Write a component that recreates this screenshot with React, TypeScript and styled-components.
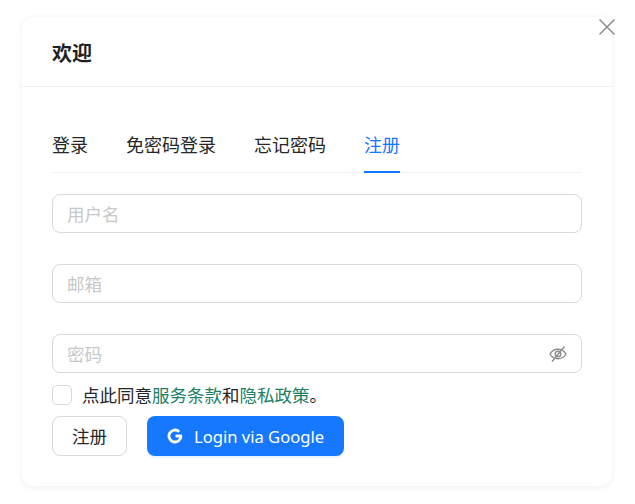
import styled, { createGlobalStyle } from "styled-components";
import { useState } from "react";

const GlobalStyle = createGlobalStyle`
  html, body {
    margin: 0;
    background: #fff;
  }
  body {
    font-family: "Noto Sans", "Noto Sans CJK SC", sans-serif;
    color: #1f1f1f;
  }
  * {
    box-sizing: border-box;
  }
`;

const Page = styled.div`
  position: relative;
  width: 635px;
  height: 504px;
  padding: 17px 23px 18px 22px;
  overflow: hidden;
`;

const CloseButton = styled.button`
  position: absolute;
  top: 19px;
  right: 20px;
  width: 16px;
  height: 16px;
  padding: 0;
  border: none;
  background: none;
  display: flex;
  color: #8c8c8c;
`;

const Card = styled.div`
  height: 469px;
  background: #fff;
  border-radius: 12px;
  box-shadow: 0 1px 6px rgba(0, 0, 0, 0.07);
`;

const Header = styled.header`
  height: 70px;
  padding: 4px 30px 0;
  display: flex;
  align-items: center;
  border-bottom: 1px solid #f0f0f0;
`;

const Title = styled.h2`
  margin: 0;
  font-size: 20px;
  line-height: 28px;
  font-weight: 700;
  color: #1f1f1f;
`;

const Body = styled.div`
  padding: 36px 30px 0;
`;

const Tabs = styled.nav`
  height: 50px;
  display: flex;
  gap: 38px;
  border-bottom: 1px solid #f0f0f0;
`;

const Tab = styled.a<{ $active?: boolean }>`
  height: 50px;
  padding-top: 9px;
  font-size: 18px;
  line-height: 26px;
  font-weight: 400;
  color: ${({ $active }) => ($active ? "#1677ff" : "#262626")};
  border-bottom: 2px solid ${({ $active }) => ($active ? "#1677ff" : "transparent")};
`;

const Fields = styled.div`
  margin-top: 21px;
  display: flex;
  flex-direction: column;
  gap: 31px;
`;

const InputBox = styled.div`
  height: 39px;
  padding: 0 14px;
  display: flex;
  align-items: center;
  justify-content: space-between;
  border: 1px solid #d9d9d9;
  border-radius: 8px;
`;

const Input = styled.input`
  flex: 1;
  min-width: 0;
  padding: 0;
  border: none;
  outline: none;
  background: none;
  font-family: inherit;
  font-size: 17.5px;
  font-weight: 400;
  &::placeholder {
    color: #c8c8c8;
  }
`;

const EyeIcon = styled.svg`
  width: 18px;
  height: 18px;
  color: #8c8c8c;
  flex: none;
`;

const AgreeRow = styled.label`
  margin-top: 12px;
  height: 20px;
  display: flex;
  align-items: center;
  gap: 10px;
  font-size: 17.5px;
  font-weight: 400;
  color: #262626;
`;

const AgreeText = styled.span`
  margin-bottom: 2px;
`;

const CheckBox = styled.input`
  appearance: none;
  width: 20px;
  height: 20px;
  margin: 0;
  flex: none;
  border: 1px solid #d9d9d9;
  border-radius: 5px;
  background: #fff;
`;

const Link = styled.a`
  color: #1a8068;
`;

const Actions = styled.div`
  margin-top: 11px;
  display: flex;
  gap: 20px;
`;

const Button = styled.button`
  height: 40px;
  width: 75px;
  padding: 0 0 2px;
  border: 1px solid #d9d9d9;
  border-radius: 8px;
  background: #fff;
  font-family: inherit;
  font-size: 17.5px;
  font-weight: 400;
  color: #262626;
`;

const GoogleButton = styled.button`
  height: 40px;
  width: 197px;
  padding: 0 0 0 20px;
  display: flex;
  align-items: center;
  gap: 11px;
  border: none;
  border-radius: 8px;
  background: #1677ff;
  box-shadow: 0 2px 0 rgba(5, 145, 255, 0.1);
  font-family: inherit;
  font-size: 16.6px;
  color: #fff;
`;

export default function App() {
  const [username, setUsername] = useState("");
  const [email, setEmail] = useState("");
  const [password, setPassword] = useState("");

  return (
    <Page>
      <GlobalStyle />
      <Card>
        <Header>
          <Title>欢迎</Title>
        </Header>
        <Body>
          <Tabs>
            <Tab>登录</Tab>
            <Tab>免密码登录</Tab>
            <Tab>忘记密码</Tab>
            <Tab $active>注册</Tab>
          </Tabs>
          <Fields>
            <InputBox>
              <Input
                placeholder="用户名"
                value={username}
                onChange={(e) => setUsername(e.target.value)}
              />
            </InputBox>
            <InputBox>
              <Input
                placeholder="邮箱"
                value={email}
                onChange={(e) => setEmail(e.target.value)}
              />
            </InputBox>
            <InputBox>
              <Input
                type="password"
                placeholder="密码"
                value={password}
                onChange={(e) => setPassword(e.target.value)}
              />
              <EyeIcon viewBox="0 0 18 18" fill="none" stroke="currentColor" strokeWidth="1.4">
                <path d="M1 9c1.800-3.200 4.500-4.800 8-4.800s6.200 1.600 8 4.800c-1.800 3.200-4.500 4.800-8 4.800S2.800 12.200 1 9z" />
                <circle cx="9" cy="9" r="2.800" />
                <path d="M15.500 1.500 3 16.500" />
              </EyeIcon>
            </InputBox>
          </Fields>
          <AgreeRow>
            <CheckBox type="checkbox" />
            <AgreeText>
              点此同意<Link>服务条款</Link>和<Link>隐私政策</Link>。
            </AgreeText>
          </AgreeRow>
          <Actions>
            <Button>注册</Button>
            <GoogleButton>
              <svg width="16" height="16" viewBox="0 0 16 16" fill="none">
                <path
                  d="M15 8H8.500M14 8a6 6 0 1 1-1.800-4.300"
                  stroke="#fff"
                  strokeWidth="2.800"
                />
              </svg>
              Login via Google
            </GoogleButton>
          </Actions>
        </Body>
      </Card>
      <CloseButton aria-label="关闭">
        <svg width="16" height="16" viewBox="0 0 16 16" fill="none" stroke="currentColor" strokeWidth="1.500">
          <path d="M0.500 0.500 15.500 15.500M15.500 0.500 0.500 15.500" />
        </svg>
      </CloseButton>
    </Page>
  );
}
